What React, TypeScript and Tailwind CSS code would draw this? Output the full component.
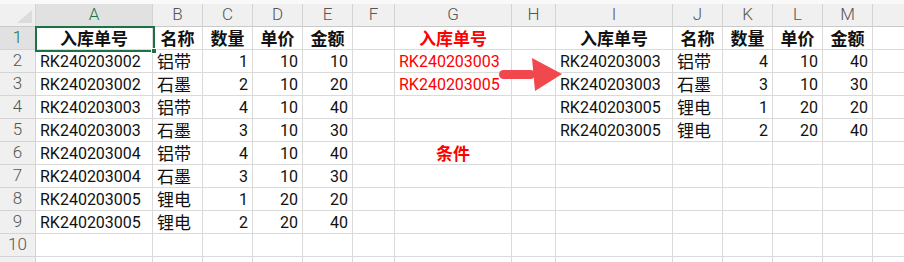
import React from 'react';

type Cell = { t: string; a?: 'l' | 'r' | 'c'; b?: boolean; red?: boolean; zh?: boolean };

const widths = [117, 50, 50, 50, 50, 42, 117, 44, 117, 50, 50, 50, 50, 40];
const letters = ['A', 'B', 'C', 'D', 'E', 'F', 'G', 'H', 'I', 'J', 'K', 'L', 'M', ''];

const left = [
  ['RK240203002', '铝带', '1', '10', '10'],
  ['RK240203002', '石墨', '2', '10', '20'],
  ['RK240203003', '铝带', '4', '10', '40'],
  ['RK240203003', '石墨', '3', '10', '30'],
  ['RK240203004', '铝带', '4', '10', '40'],
  ['RK240203004', '石墨', '3', '10', '30'],
  ['RK240203005', '锂电', '1', '20', '20'],
  ['RK240203005', '锂电', '2', '20', '40'],
];

const right = [
  ['RK240203003', '铝带', '4', '10', '40'],
  ['RK240203003', '石墨', '3', '10', '30'],
  ['RK240203005', '锂电', '1', '20', '20'],
  ['RK240203005', '锂电', '2', '20', '40'],
];

const heads = ['入库单号', '名称', '数量', '单价', '金额'];

function buildRows(): Cell[][] {
  const rows: Cell[][] = [];
  for (let r = 0; r < 10; r++) rows.push(Array.from({ length: 14 }, () => ({ t: '' })));
  heads.forEach((h, i) => {
    rows[0][i] = { t: h, a: 'c', b: true };
    rows[0][8 + i] = { t: h, a: 'c', b: true };
  });
  rows[0][6] = { t: '入库单号', a: 'c', b: true, red: true };
  left.forEach((d, r) => {
    d.forEach((v, i) => {
      rows[r + 1][i] = { t: v, a: i < 2 ? 'l' : 'r', zh: i === 1 };
    });
  });
  right.forEach((d, r) => {
    d.forEach((v, i) => {
      rows[r + 1][8 + i] = { t: v, a: i < 2 ? 'l' : 'r', zh: i === 1 };
    });
  });
  rows[1][6] = { t: 'RK240203003', a: 'l', red: true };
  rows[2][6] = { t: 'RK240203005', a: 'l', red: true };
  rows[5][6] = { t: '条件', a: 'c', b: true, red: true };
  return rows;
}

const rows = buildRows();

function Arrow() {
  return (
    <svg className="absolute left-[490px] top-[52px]" width="80" height="44" viewBox="0 0 80 44">
      <rect x="9" y="18" width="36" height="9" rx="4.5" fill="#f1484e" />
      <polygon points="42,6 45,39 72,22" fill="#f1484e" />
    </svg>
  );
}

export default function App() {
  return (
    <div
      className="relative w-[904px] h-[262px] overflow-hidden bg-white text-[#111]"
      style={{ fontFamily: 'Roboto, "Noto Sans CJK SC", sans-serif' }}
    >
      {/* top strip */}
      <div className="h-[4px] bg-[#f9f9f9]" />

      {/* column letters */}
      <div className="flex h-[23px] bg-[#f0f0f0] border-b border-[#c9c9c9]">
        <div className="relative w-[36px] shrink-0 border-r border-[#d4d4d4]">
          <div className="absolute right-[3px] bottom-[3px] w-0 h-0 border-l-[15px] border-l-transparent border-b-[13px] border-b-[#dcdcdc]" />
        </div>
        {widths.map((w, i) => (
          <div
            key={i}
            style={{ width: w }}
            className={
              'shrink-0 flex items-center justify-center text-[17px] font-light border-r border-[#d4d4d4] ' +
              (i === 0 ? 'bg-[#e1e1e1] text-[#1e7145]' : 'text-[#555]')
            }
          >
            {letters[i]}
          </div>
        ))}
      </div>

      {/* rows */}
      {rows.map((row, r) => (
        <div key={r} className="flex h-[23px]">
          <div
            className={
              'w-[36px] shrink-0 flex items-center justify-center text-[17px] font-light border-r border-b border-[#d4d4d4] ' +
              (r === 0 ? 'bg-[#e1e1e1] text-[#1e7145]' : 'bg-[#f0f0f0] text-[#555]')
            }
          >
            {r + 1}
          </div>
          {row.map((c, i) => (
            <div
              key={i}
              style={{ width: widths[i] }}
              className={
                'shrink-0 flex items-end leading-[20px] whitespace-nowrap px-[4px] border-r border-b border-[#dadada] ' +
                (c.a === 'r' ? 'justify-end ' : c.a === 'c' ? 'justify-center ' : 'justify-start ') +
                (c.b || c.zh ? 'text-[17px] ' : 'text-[16px] ') +
                (c.b ? 'font-bold ' : '') +
                (c.red ? 'text-[#ff0000]' : '')
              }
            >
              {c.t}
            </div>
          ))}
        </div>
      ))}
      <div className="flex h-[10px]">
        <div className="w-[36px] shrink-0 bg-[#f0f0f0] border-r border-[#d4d4d4]" />
        {widths.map((w, i) => (
          <div key={i} style={{ width: w }} className="shrink-0 border-r border-[#dadada]" />
        ))}
      </div>

      {/* selection */}
      <div className="absolute left-[35px] top-[26px] w-[120px] h-[26px] border-2 border-[#1e7145]" />
      <div className="absolute left-[151px] top-[48px] w-[6px] h-[6px] bg-[#1e7145] border border-white" />

      <Arrow />
    </div>
  );
}
